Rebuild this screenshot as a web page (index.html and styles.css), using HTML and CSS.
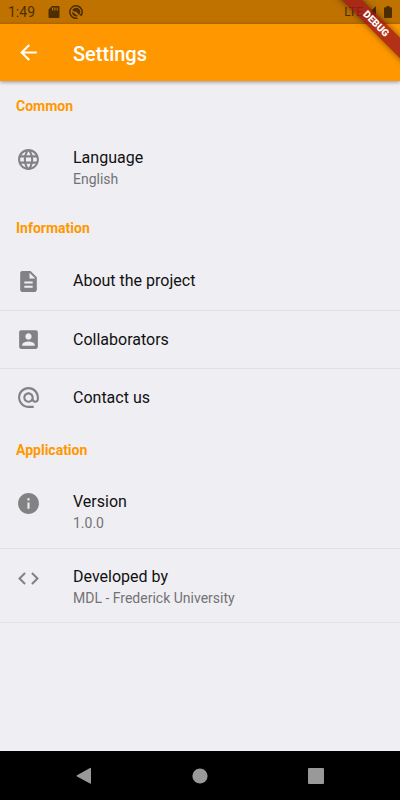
FILE: index.html
```html
<!DOCTYPE html>
<html lang="en">
<head>
<meta charset="utf-8">
<meta name="viewport" content="width=device-width, initial-scale=1">
<title>Settings</title>
<link rel="stylesheet" href="styles.css">
</head>
<body>
<div class="screen">
  <div class="status">
    <span class="time">1:49</span>
    <svg class="sd" viewBox="0 0 12 14"><path fill="currentColor" fill-rule="evenodd" d="M4 1h6.500q1 0 1 1v10q0 1-1 1h-9q-1 0-1-1V4.500zM4 2.500v3h1.200v-3zM6.300 2.500v3h1.200v-3zM8.600 2.500v3h1.200v-3z"/></svg>
    <svg class="sync" viewBox="0 0 14 14"><path fill="none" stroke="currentColor" stroke-width="1.500" d="M8.500 13A6.200 6.200 0 1 1 12.300 10.200L10.700 9.300"/><path fill="currentColor" d="M3.300 5.200A4.200 4.200 0 0 1 11 8.600L9.800 9.800 7.600 7 4.800 6.300zM3 6.800L9 11A4.200 4.200 0 0 1 3 6.800z"/></svg>
    <span class="network">LTE</span>
    <svg class="signal" viewBox="0 0 14 14"><path fill="currentColor" d="M13 1v12H1z"/></svg>
    <svg class="battery" viewBox="0 0 8 14"><path fill="currentColor" d="M2.500 1h3v1.300H7q1 0 1 1V12q0 1-1 1H1q-1 0-1-1V3.300q0-1 1-1h1.500z"/></svg>
  </div>
  <header class="appbar">
    <button class="back" aria-label="Back"><svg class="icon" viewBox="0 0 24 24"><path fill="currentColor" d="M20 11H7.830l5.590-5.590L12 4l-8 8 8 8 1.410-1.410L7.830 13H20v-2z"/></svg></button>
    <h1>Settings</h1>
  </header>
  <main>
    <section>
      <h2>Common</h2>
      <a class="row tall" href="#language">
        <svg class="icon" viewBox="0 0 24 24"><path fill="currentColor" d="M11.990 2C6.470 2 2 6.480 2 12s4.470 10 9.990 10C17.520 22 22 17.520 22 12S17.520 2 11.990 2zm6.930 6h-2.950c-.32-1.250-.78-2.450-1.380-3.560 1.840.63 3.370 1.910 4.330 3.560zM12 4.040c.83 1.200 1.480 2.530 1.910 3.960h-3.820c.43-1.430 1.080-2.760 1.910-3.960zM4.260 14C4.100 13.360 4 12.690 4 12s.1-1.360.26-2h3.380c-.08.660-.14 1.320-.14 2s.06 1.340.14 2H4.260zm.82 2h2.950c.32 1.250.78 2.450 1.380 3.560-1.840-.63-3.370-1.900-4.330-3.560zm2.950-8H5.080c.96-1.660 2.490-2.930 4.330-3.560C8.810 5.550 8.350 6.750 8.030 8zM12 19.960c-.83-1.200-1.480-2.530-1.910-3.960h3.820c-.43 1.430-1.080 2.760-1.910 3.960zM14.340 14H9.660c-.09-.66-.16-1.320-.16-2s.07-1.350.16-2h4.680c.09.650.16 1.320.16 2s-.07 1.340-.16 2zm.25 5.560c.6-1.110 1.060-2.310 1.380-3.560h2.950c-.96 1.650-2.490 2.930-4.330 3.560zM16.360 14c.08-.66.14-1.320.14-2s-.06-1.340-.14-2h3.380c.16.640.26 1.310.26 2s-.1 1.360-.26 2h-3.380z"/></svg>
        <span class="label"><span class="title">Language</span><span class="sub">English</span></span>
      </a>
    </section>
    <section>
      <h2>Information</h2>
      <a class="row" href="#about">
        <svg class="icon" viewBox="0 0 24 24"><path fill="currentColor" d="M14 2H6c-1.100 0-1.990.9-1.990 2L4 20c0 1.100.89 2 1.990 2H18c1.100 0 2-.9 2-2V8l-6-6zm2 16H8v-2h8v2zm0-4H8v-2h8v2zm-3-5V3.500L18.500 9H13z"/></svg>
        <span class="title">About the project</span>
      </a>
      <a class="row" href="#collaborators">
        <svg class="icon" viewBox="0 0 24 24"><path fill="currentColor" d="M3 5v14c0 1.100.89 2 2 2h14c1.100 0 2-.9 2-2V5c0-1.100-.9-2-2-2H5c-1.110 0-2 .9-2 2zm12 4c0 1.660-1.340 3-3 3s-3-1.340-3-3 1.340-3 3-3 3 1.340 3 3zm-9 8c0-2 4-3.100 6-3.100s6 1.100 6 3.100v1H6v-1z"/></svg>
        <span class="title">Collaborators</span>
      </a>
      <a class="row" href="#contact">
        <svg class="icon" viewBox="0 0 24 24"><path fill="currentColor" d="M12 2C6.480 2 2 6.480 2 12s4.480 10 10 10h5v-2h-5c-4.340 0-8-3.660-8-8s3.660-8 8-8 8 3.660 8 8v1.430c0 .79-.71 1.570-1.500 1.570s-1.500-.78-1.500-1.570V12c0-2.760-2.240-5-5-5s-5 2.240-5 5 2.240 5 5 5c1.380 0 2.640-.56 3.540-1.470.65.890 1.770 1.470 2.960 1.470 1.970 0 3.500-1.600 3.500-3.570V12c0-5.520-4.480-10-10-10zm0 13c-1.660 0-3-1.340-3-3s1.340-3 3-3 3 1.340 3 3-1.340 3-3 3z"/></svg>
        <span class="title">Contact us</span>
      </a>
    </section>
    <section class="closed">
      <h2>Application</h2>
      <div class="row tall">
        <svg class="icon" viewBox="0 0 24 24"><path fill="currentColor" d="M12 2C6.480 2 2 6.480 2 12s4.480 10 10 10 10-4.480 10-10S17.520 2 12 2zm1 15h-2v-6h2v6zm0-8h-2V7h2v2z"/></svg>
        <span class="label"><span class="title">Version</span><span class="sub">1.0.0</span></span>
      </div>
      <div class="row tall">
        <svg class="icon" viewBox="0 0 24 24"><path fill="currentColor" d="M9.400 16.600L4.800 12l4.600-4.600L8 6l-6 6 6 6 1.400-1.400zm5.200 0l4.600-4.600-4.600-4.600L16 6l6 6-6 6-1.400-1.400z"/></svg>
        <span class="label"><span class="title">Developed by</span><span class="sub">MDL - Frederick University</span></span>
      </div>
    </section>
  </main>
  <nav class="navbar" aria-label="System">
    <button aria-label="Back"><svg viewBox="0 0 18 18"><path fill="currentColor" d="M16 1.500v14.500q0 1-1 .5L2 9.500q-1-.7 0-1.300L15 1q1-.5 1 .5z"/></svg></button>
    <button aria-label="Home"><svg viewBox="0 0 18 18"><circle cx="9" cy="9" r="7.600" fill="currentColor"/></svg></button>
    <button aria-label="Recent apps"><svg viewBox="0 0 18 18"><rect x="1" y="1" width="16" height="16" rx="1" fill="currentColor"/></svg></button>
  </nav>
  <div class="ribbon"><span>DEBUG</span></div>
</div>
</body>
</html>
```
FILE: styles.css
```css
* {
  box-sizing: border-box;
}

body {
  margin: 0;
  font-family: Roboto, "Liberation Sans", sans-serif;
  background: #efeef3;
}

button {
  padding: 0;
  border: 0;
  background: none;
  color: inherit;
}

svg {
  display: block;
  flex: none;
}

.screen {
  position: relative;
  display: flex;
  flex-direction: column;
  min-height: 100vh;
  overflow: hidden;
}

.status {
  display: flex;
  align-items: center;
  height: 24px;
  padding: 0 8px;
  background: #bf7200;
  color: #4c2e00;
}

.time {
  font-size: 14px;
  margin-right: 13px;
}

.sd {
  width: 12px;
  height: 14px;
  margin-right: 9px;
}

.sync {
  width: 14px;
  height: 14px;
}

.network {
  margin-left: auto;
  font-size: 12px;
}

.signal {
  width: 14px;
  height: 14px;
  margin-right: 7px;
}

.battery {
  width: 8px;
  height: 14px;
}

.appbar {
  display: flex;
  align-items: center;
  gap: 32px;
  height: 57px;
  padding: 0 16px;
  background: #ff9800;
  color: #fff;
  box-shadow: 0 1px 4px rgba(0, 0, 0, 0.4);
}

h1 {
  margin: 0;
  padding-top: 2px;
  font-size: 20px;
  font-weight: 500;
}

.icon {
  width: 25px;
  height: 25px;
}

main {
  flex: 1;
  padding-top: 1px;
}

h2 {
  margin: 0;
  padding: 0 16px;
  font-size: 14px;
  font-weight: 700;
  line-height: 48px;
  color: #ff9800;
}

.row {
  display: flex;
  align-items: center;
  gap: 32px;
  min-height: 58px;
  padding: 0 16px;
  color: #828284;
  text-decoration: none;
}

.row + .row {
  border-top: 1px solid #dfdee3;
}

.closed {
  border-bottom: 1px solid #e4e3e8;
}

.tall {
  align-items: flex-start;
  min-height: 74px;
  padding-top: 17px;
}

.label {
  display: flex;
  flex-direction: column;
}

.title {
  font-size: 16px;
  line-height: 22px;
  color: #111;
}

.sub {
  font-size: 14px;
  line-height: 20px;
  color: #737276;
}

.navbar {
  display: flex;
  justify-content: center;
  gap: 98px;
  height: 49px;
  background: #000;
  color: #999;
}

.navbar svg {
  width: 18px;
  height: 18px;
}

.ribbon {
  position: absolute;
  top: 0;
  right: 0;
  width: 80px;
  height: 80px;
  overflow: hidden;
}

.ribbon span {
  position: absolute;
  top: 17px;
  right: -36px;
  width: 120px;
  transform: rotate(45deg);
  background: rgba(160, 20, 28, 0.78);
  box-shadow: 0 0 6px rgba(0, 0, 0, 0.5);
  color: #fff;
  font-size: 10px;
  font-weight: 900;
  line-height: 14px;
  text-align: center;
}
```
